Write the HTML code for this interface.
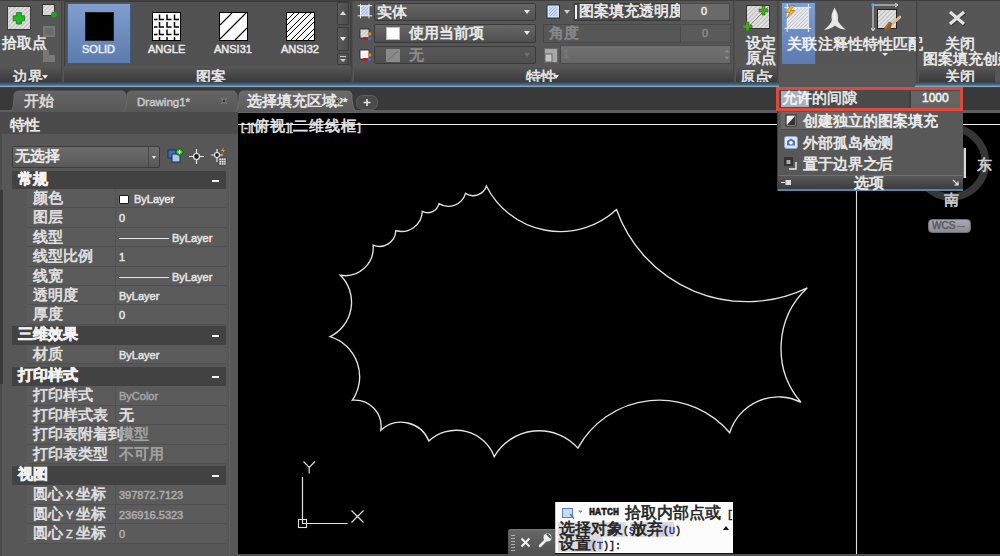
<!DOCTYPE html>
<html><head><meta charset="utf-8">
<style>
*{box-sizing:border-box;margin:0;padding:0}
html,body{width:1000px;height:556px;overflow:hidden;background:#000}
body{position:relative;font-family:"Liberation Sans",sans-serif;font-size:11px;color:#e6e6e6}
.a{position:absolute}
.t{position:absolute;white-space:nowrap;line-height:1;-webkit-text-stroke:0.5px}
.c{font-size:14.6px;line-height:0;-webkit-text-stroke:0.6px}
.c2{font-family:'Liberation Sans',sans-serif;font-size:15.5px;line-height:0;-webkit-text-stroke:0.6px}
/* ribbon */
#rib{left:0;top:0;width:1000px;height:87px;background:#565656}
.ptitle{position:absolute;top:66px;height:17px;background:linear-gradient(#575757,#3e3e3e 80%,#3a3a3a)}
.sep{position:absolute;top:0;width:3px;height:84px;background:linear-gradient(90deg,#404040,#5a5a5a)}
#blue{left:0;top:82px;width:1000px;height:7px;background:linear-gradient(#2e3a42 0,#3a5a70 1px,#4a6a85 3.3px,#8aa3bb 3.8px,#8aa3bb 5px,#25303a 5.6px,#25303a 7px)}
.combo{position:absolute;border:1px solid #3a3a3a;background:linear-gradient(#666,#505050);border-radius:2px}
.arrow{position:absolute;width:0;height:0;border-left:3.5px solid transparent;border-right:3.5px solid transparent;border-top:4px solid #e8e8e8}
/* tabs */
#tabbar{left:0;top:88px;width:1000px;height:24px;background:#393939}
/* props */
</style></head><body>

<div id="rib" class="a">
  <!-- boundary panel -->
  <svg class="a" style="left:7px;top:6px" width="24" height="24" viewBox="0 0 24 24">
    <defs><pattern id="hp" width="3" height="3" patternUnits="userSpaceOnUse" patternTransform="rotate(45)"><rect width="3" height="3" fill="#e0e0e0"/><rect width="1" height="3" fill="#bdbdbd"/></pattern></defs>
    <rect x="0.5" y="0.5" width="23" height="23" fill="url(#hp)" stroke="#3a3a3a"/>
    <path d="M9.4 6.6h5v3.2h3.2v5h-3.2v3.2h-5v-3.2h-3.2v-5h3.2z" fill="#1fb82a" stroke="#137a18" stroke-width="0.8"/>
  </svg>
  <div class="t" style="left:2px;top:38.5px;color:#ececec"><span class="c">拾取点</span></div>
  <svg class="a" style="left:42px;top:4px" width="16" height="14" viewBox="0 0 16 14">
    <rect x="0.5" y="0.5" width="12" height="11" fill="url(#hp)" stroke="#333"/>
    <circle cx="12" cy="10.5" r="3" fill="#2a9a2a"/>
  </svg>
  <svg class="a" style="left:43px;top:26px" width="13" height="12"><rect x="0" y="0" width="12" height="11" fill="#777"/><rect x="2" y="2" width="8" height="7" fill="#6a6a6a"/></svg>
  <svg class="a" style="left:43px;top:50px" width="13" height="13"><rect x="0" y="0" width="6" height="12" fill="#777"/><rect x="6" y="5" width="6" height="7" fill="#7a7a7a"/></svg>

  <!-- gallery -->
  <div class="a" style="left:64px;top:1px;width:287px;height:66px;border:1px solid #3b3b3b;border-radius:2px;background:#515151"></div>
  <div class="a" style="left:67px;top:3px;width:64px;height:61px;background:linear-gradient(#7f9fcf,#5d7bad);border:1px solid #41597f"></div>
  <div class="a" style="left:85px;top:12px;width:29px;height:29px;background:#000;border:1px solid #222"></div>
  <div class="t" style="left:82px;top:44px;font-size:11px;color:#e8eef8">SOLID</div>
  <svg class="a" style="left:152px;top:12px" width="29" height="29" viewBox="0 0 29 29">
    <rect x="0.5" y="0.5" width="28" height="28" fill="#fff" stroke="#000"/>
    <path d="M2 7.5h3.5M7.5 2.5V7.5h4.5M15 2.5V7.5h4.5M22.5 2.5V7.5h4.5M2 15h3.5M7.5 10V15h4.5M15 10V15h4.5M22.5 10V15h4.5M2 22.5h3.5M7.5 17.5V22.5h4.5M15 17.5V22.5h4.5M22.5 17.5V22.5h4.5M7.5 25V28M15 25V28M22.5 25V28" stroke="#000" stroke-width="1.5" fill="none"/>
  </svg>
  <div class="t" style="left:148px;top:44px;font-size:11px;color:#e8e8e8">ANGLE</div>
  <svg class="a" style="left:219px;top:12px" width="29" height="29" viewBox="0 0 29 29">
    <rect x="0.5" y="0.5" width="28" height="28" fill="#fff" stroke="#000"/>
    <path d="M1 13L13 1M1 27L27 1M16 28L28 16" stroke="#000" stroke-width="1.1" fill="none"/>
  </svg>
  <div class="t" style="left:214px;top:44px;font-size:11px;color:#e8e8e8">ANSI31</div>
  <svg class="a" style="left:286px;top:12px" width="29" height="29" viewBox="0 0 29 29">
    <rect x="0.5" y="0.5" width="28" height="28" fill="#fff" stroke="#000"/>
    <path d="M1 8L8 1M1 13L13 1M1 20L20 1M1 25L25 1M5 28L28 5M10 28L28 10M17 28L28 17M22 28L28 22" stroke="#000" stroke-width="1" fill="none"/>
  </svg>
  <div class="t" style="left:281px;top:44px;font-size:11px;color:#e8e8e8">ANSI32</div>
  <div class="a" style="left:337px;top:2px;width:12px;height:23px;background:linear-gradient(90deg,#5a5a5a,#4c4c4c);border:1px solid #3c3c3c"></div>
  <div class="a" style="left:337px;top:27px;width:12px;height:24px;background:linear-gradient(90deg,#5a5a5a,#4c4c4c);border:1px solid #3c3c3c"></div>
  <div class="a" style="left:337px;top:53px;width:12px;height:12px;background:linear-gradient(90deg,#5a5a5a,#4c4c4c);border:1px solid #3c3c3c"></div>
  <div class="a" style="left:340px;top:11px;width:0;height:0;border-left:3px solid transparent;border-right:3px solid transparent;border-bottom:4px solid #ddd"></div>
  <div class="arrow" style="left:340px;top:37px;border-left-width:3px;border-right-width:3px;border-top-width:4px"></div>
  <div class="a" style="left:340px;top:56px;width:6px;height:1px;background:#ccc"></div>
  <div class="arrow" style="left:340px;top:59px;border-left-width:3px;border-right-width:3px;border-top-width:3px;border-top-color:#ccc"></div>

  <!-- properties panel -->
  <svg class="a" style="left:357px;top:3px" width="16" height="17" viewBox="0 0 16 17">
    <defs><pattern id="hpb" width="2.2" height="2.2" patternUnits="userSpaceOnUse" patternTransform="rotate(45)"><rect width="2.2" height="2.2" fill="#d0dcf2"/><rect width="0.8" height="2.2" fill="#a0b4dc"/></pattern></defs>
    <rect x="3.7" y="2.7" width="8.3" height="10.1" fill="url(#hpb)"/>
    <path d="M3.5 0.8v14.5M12 0.8v14.5M0.6 2.7h14.5M0.6 12.8h14.5" stroke="#f0f0f0" stroke-width="1"/>
  </svg>
  <div class="combo" style="left:374px;top:3px;width:162px;height:18px"></div>
  <div class="t" style="left:377px;top:8px;color:#ececec"><span class="c">实体</span></div>
  <div class="arrow" style="left:524px;top:10px"></div>
  <svg class="a" style="left:358px;top:26px" width="15" height="16" viewBox="0 0 15 16">
    <rect x="2" y="3" width="9" height="9" fill="url(#hp)" stroke="#222" stroke-width="0.8"/>
    <path d="M4 12.5h6l-1.5 1.5h-4z" fill="#c02828"/><rect x="5" y="11" width="5" height="3" fill="#b82020"/>
    <circle cx="11.5" cy="8" r="1.8" fill="#e08a20"/><circle cx="11.5" cy="12.5" r="1.8" fill="#3a70c0"/>
  </svg>
  <div class="combo" style="left:374px;top:24px;width:162px;height:19px"></div>
  <div class="a" style="left:386px;top:27px;width:14px;height:13px;background:#fff;border:1px solid #bbb"></div>
  <div class="t" style="left:409px;top:29px;color:#ececec"><span class="c">使用当前项</span></div>
  <div class="arrow" style="left:524px;top:31px"></div>
  <svg class="a" style="left:358px;top:47px" width="15" height="16" viewBox="0 0 15 16">
    <rect x="2" y="3" width="9" height="9" fill="#f4f4f4" stroke="#222" stroke-width="0.8"/>
    <rect x="5" y="11" width="5" height="3" fill="#b82020"/>
    <circle cx="11.5" cy="8" r="1.8" fill="#e08a20"/><circle cx="11.5" cy="12.5" r="1.8" fill="#3a70c0"/>
  </svg>
  <div class="combo" style="left:374px;top:46px;width:162px;height:18px;background:linear-gradient(#575757,#4f4f4f)"></div>
  <svg class="a" style="left:386px;top:49px" width="14" height="13"><rect width="14" height="13" fill="#8a8a8a"/><path d="M2 11L12 2" stroke="#6c6c6c"/></svg>
  <div class="t" style="left:409px;top:51px;color:#8e8e8e"><span class="c">无</span></div>
  <div class="arrow" style="left:524px;top:53px;border-top-color:#6e6e6e"></div>

  <svg class="a" style="left:546px;top:4px" width="15" height="15" viewBox="0 0 15 15"><rect x="0.5" y="0.5" width="13.5" height="14" fill="#1e3450" /><rect x="1.5" y="1.5" width="11.5" height="12" fill="#d6e4f4"/><rect x="3" y="3" width="8.5" height="9" fill="url(#hpb)"/></svg>
  <div class="arrow" style="left:564px;top:10px;border-left-width:3px;border-right-width:3px;border-top-width:4px;border-top-color:#ccc"></div>
  <div class="a" style="left:574px;top:3px;width:106px;height:18px;background:#4a4a4a;border:1px solid #3a3a3a"></div>
  <div class="a" style="left:575px;top:5px;width:2px;height:14px;background:#f2f2f2"></div>
  <div class="t" style="left:579px;top:7px;color:#ececec"><span class="c">图案填充透明度</span></div>
  <div class="a" style="left:680px;top:3px;width:50px;height:18px;background:#6a6a6a;border:1px solid #4a4a4a"></div>
  <div class="t" style="left:701px;top:6px;color:#ececec">0</div>
  <div class="a" style="left:543px;top:24px;width:138px;height:19px;background:#575757;border:1px solid #484848"></div>
  <div class="t" style="left:549px;top:28.5px;color:#8a8a8a"><span class="c">角度</span></div>
  <div class="a" style="left:680px;top:24px;width:51px;height:19px;background:#5a5a5a;border:1px solid #4a4a4a"></div>
  <div class="t" style="left:702px;top:28px;color:#8a8a8a">0</div>
  <svg class="a" style="left:544px;top:48px" width="14" height="15" viewBox="0 0 14 15"><rect x="0.5" y="0.5" width="13" height="14" fill="#a8a8a8" stroke="#6a6a6a"/><rect x="1" y="6" width="7" height="8" fill="#c4c4c4" stroke="#555" stroke-width="0.8"/></svg>
  <div class="a" style="left:560px;top:45px;width:171px;height:19px;background:linear-gradient(#717171,#676767);border:1px solid #4a4a4a"></div>
  <div class="t" style="left:563px;top:49px;color:#7a7a7a">1</div>
  <svg class="a" style="left:724px;top:48px" width="6" height="13"><path d="M0.5 4.5l2.5-3l2.5 3z" fill="#8a8a8a"/><path d="M0.5 8.5l2.5 3l2.5-3z" fill="#8a8a8a"/></svg>

  <!-- origin -->
  <svg class="a" style="left:741px;top:4px" width="30" height="30" viewBox="0 0 30 30">
    <rect x="5.5" y="1.5" width="23" height="23" fill="url(#hp)" stroke="#333"/>
    <path d="M7 23L27 3" stroke="#888" stroke-width="1"/>
    <path d="M21 2h3v3h3v3h-3v3h-3v-3h-3v-3h3z" fill="#4aa526" stroke="#2d6a14" stroke-width="0.6"/>
    <path d="M5 18h3v3h3v3h-3v3h-3v-3h-3v-3h3z" fill="#4aa526" stroke="#2d6a14" stroke-width="0.6"/>
  </svg>
  <div class="t" style="left:746px;top:39px;color:#ececec"><span class="c">设定</span></div>
  <div class="t" style="left:746px;top:54px;color:#ececec"><span class="c">原点</span></div>

  <!-- options -->
  <div class="a" style="left:781px;top:2px;width:35px;height:63px;background:linear-gradient(#7f9fd0,#5d7aae);border:1px solid #44608c"></div>
  <svg class="a" style="left:784px;top:4px" width="28" height="28" viewBox="0 0 28 28">
    <defs><pattern id="hp2" width="2.5" height="2.5" patternUnits="userSpaceOnUse" patternTransform="rotate(45)"><rect width="2.5" height="2.5" fill="#eef0f4"/><rect width="0.9" height="2.5" fill="#b8bcc4"/></pattern></defs>
    <rect x="3" y="3.6" width="21" height="20.5" fill="url(#hp2)"/>
    <path d="M3.2 0v28M24.4 0v28M0.4 3.6h27M0.4 24.4h27" stroke="#e8eef8" stroke-width="1"/>
    <path d="M7 1.5l-5.5 7h4.5l-3.5 6l8.5-8h-4.5l4-5z" fill="#f2b630" stroke="#9a6a10" stroke-width="0.6"/>
  </svg>
  <div class="t" style="left:787px;top:39.5px;color:#f2f4f8"><span class="c">关联</span></div>
  <svg class="a" style="left:823px;top:7px" width="24" height="24" viewBox="0 0 24 24">
    <path d="M11.6 0.6C12.5 3 15 6.5 15 9.5C15 12 14.5 13 15.5 15C17.5 18 20.5 21 23 22.6C19 22.5 15 21 12 18.5C9 21 5 22.5 1 23C3.5 21 6.5 18 8.3 15C9.3 13 8.5 12 8.5 9.5C8.5 6.5 10.5 3 11.6 0.6Z" fill="#e6e6e6"/>
    <path d="M11.6 4L11.6 13" stroke="#f8f8f8" stroke-width="1"/>
  </svg>
  <div class="t" style="left:818px;top:39.5px;color:#ececec"><span class="c">注释性</span></div>
  <svg class="a" style="left:871px;top:3px" width="30" height="30" viewBox="0 0 30 30">
    <path d="M2 2h24M2 2v25" stroke="#e8e8e8" stroke-width="1"/>
    <path d="M24 0l3 2l-3 2M0 25l2 3l2-3" stroke="#e8e8e8" fill="none"/>
    <circle cx="2" cy="2" r="1.8" fill="#6aa0e0"/>
    <rect x="6.5" y="6.5" width="19" height="19" fill="url(#hp)" stroke="#222"/>
    <path d="M29 14L20 22" stroke="#d6bf8c" stroke-width="3" stroke-linecap="round"/>
    <path d="M21 20l-3 -1.5l-5 6.5l1.5 4l5-3z" fill="#8a5a2a"/>
    <path d="M18.5 19.5l-4.5 6" stroke="#b07a40" stroke-width="1.2"/>
  </svg>
  <div class="t" style="left:863px;top:39.5px;color:#ececec"><span class="c">特性匹配</span></div>
  <div class="arrow" style="left:882px;top:53px;border-left-width:3px;border-right-width:3px;border-top-width:3px"></div>

  <!-- close -->
  <svg class="a" style="left:947px;top:10px" width="20" height="16" viewBox="0 0 20 16">
    <path d="M3 2L17 14M17 2L3 14" stroke="#303030" stroke-width="3.6" transform="translate(0.6,0.8)"/><path d="M3 2L17 14M17 2L3 14" stroke="#e2e2e2" stroke-width="3.2"/>
  </svg>
  <div class="t" style="left:945px;top:39.5px;color:#ececec"><span class="c">关闭</span></div>
  <div class="t" style="left:923px;top:55px;color:#ececec"><span class="c">图案填充创建</span></div>

  <div class="sep" style="left:61px"></div>
  <div class="sep" style="left:351px"></div>
  <div class="sep" style="left:733px"></div>
  <div class="sep" style="left:777px"></div>
  <div class="sep" style="left:916px"></div>
  <div class="ptitle" style="left:0;width:61px"></div>
  <div class="ptitle" style="left:64px;width:287px"></div>
  <div class="ptitle" style="left:354px;width:379px"></div>
  <div class="ptitle" style="left:736px;width:41px"></div>
    <div class="ptitle" style="left:919px;width:76px"></div>
  <div class="t" style="left:13px;top:73px"><span class="c">边界</span></div>
  <div class="arrow" style="left:42px;top:75px"></div>
  <div class="t" style="left:196px;top:73px"><span class="c">图案</span></div>
  <div class="t" style="left:526px;top:73px"><span class="c">特性</span></div>
  <div class="arrow" style="left:553px;top:75px"></div>
  <div class="t" style="left:740px;top:73px"><span class="c">原点</span></div>
  <div class="arrow" style="left:767px;top:75px"></div>
  <div class="t" style="left:945px;top:73px"><span class="c">关闭</span></div>
</div>
<div id="blue" class="a"></div>
<div class="a" style="left:0;top:0;width:1000px;height:1px;background:#3e3e3e"></div>
<div class="a" style="left:779px;top:64px;width:136px;height:24px;background:#575757"></div>

<div id="tabbar" class="a">
  <svg class="a" style="left:0;top:0" width="1000" height="25">
    <defs><linearGradient id="tg" x1="0" y1="0" x2="0" y2="1"><stop offset="0" stop-color="#646464"/><stop offset="1" stop-color="#575757"/></linearGradient>
    <linearGradient id="tga" x1="0" y1="0" x2="0" y2="1"><stop offset="0" stop-color="#6a6a6a"/><stop offset="1" stop-color="#5a5a5a"/></linearGradient></defs>
    <rect x="0" y="22" width="1000" height="3" fill="#5e5e5e"/>
    <path d="M10 25 C12.4 22 14 17 14 8 Q14 3 19 3 H121 Q126 3 126 8 C126 17 128.4 22 130 25 Z" fill="url(#tg)" stroke="#6c6c6c" stroke-width="0.8"/>
    <path d="M123 25 C125.4 22 127 17 127 8 Q127 3 132 3 H232 Q237 3 237 8 C237 17 239.4 22 241 25 Z" fill="url(#tg)" stroke="#6c6c6c" stroke-width="0.8"/>
    <path d="M235 25 C237.4 22 239 17 239 8 Q239 3 244 3 H347 Q352 3 352 8 C352 17 354.4 22 356 25 Z" fill="url(#tga)" stroke="#767676" stroke-width="0.8"/>
    <rect x="356.5" y="7.5" width="21" height="14" rx="6" fill="#4a4a4a" stroke="#5e5e5e"/>
    <path d="M367 11v7M363.5 14.5h7" stroke="#e8e8e8" stroke-width="1.6"/>
  </svg>
  <div class="t" style="left:24px;top:9px;color:#dcdcdc"><span class="c">开始</span></div>
  <div class="t" style="left:137px;top:9px;color:#c8c8c8;font-size:11.5px">Drawing1*</div>
  <svg class="a" style="left:220px;top:8.5px" width="8" height="8"><path d="M1 1l6 6M7 1l-6 6" stroke="#7a7a7a" stroke-width="1.5"/><rect x="3" y="3" width="2" height="2" fill="#3c3c3c"/></svg>
  <div class="t" style="left:247px;top:9px;color:#eaeaea"><span class="c">选择填充区域</span>2*</div>
  <svg class="a" style="left:333px;top:8.5px" width="8" height="8"><path d="M1 1l6 6M7 1l-6 6" stroke="#7a7a7a" stroke-width="1.5"/><rect x="3" y="3" width="2" height="2" fill="#3c3c3c"/></svg>
</div>
<div id="props" class="a" style="left:0;top:0;width:238px;height:556px;background:none">
<div class="a" style="left:0;top:112px;width:238px;height:444px;background:#575757"></div>
<div class="a" style="left:0;top:112px;width:238px;height:22px;background:#4b4b4b"></div>
<div class="t" style="left:10px;top:121px;color:#ececec"><span class="c">特性</span></div>
<div class="a" style="left:0;top:134px;width:2px;height:422px;background:#4c4c4c"></div>
<div class="a" style="left:0;top:190px;width:3px;height:194px;background:#3a3a3a"></div>
<div class="a" style="left:229px;top:170px;width:1px;height:386px;background:#5f5f5f"></div>
<div class="combo" style="left:12px;top:146px;width:148px;height:22px;background:linear-gradient(#6c6c6c,#585858);border-color:#3c3c3c"></div>
<div class="a" style="left:148px;top:147px;width:1px;height:20px;background:#474747"></div>
<div class="t" style="left:15px;top:152px;color:#ececec"><span class="c">无选择</span></div>
<div class="arrow" style="left:152px;top:156px;border-left-width:2px;border-right-width:2px;border-top-width:3px"></div>
<svg class="a" style="left:167px;top:148px" width="17" height="15" viewBox="0 0 17 15"><rect x="1" y="2" width="8" height="8" fill="#3d6fb8" stroke="#1b2f55"/><rect x="5" y="6" width="8" height="8" fill="#a9c6ee" stroke="#1b2f55"/><circle cx="12.5" cy="4" r="3.5" fill="#2aa830" stroke="#0f5a12" stroke-width="0.7"/><path d="M12.5 2v4M10.5 4h4" stroke="#fff" stroke-width="1"/></svg>
<svg class="a" style="left:189px;top:149px" width="15" height="15" viewBox="0 0 15 15"><path d="M7.5 0v15M0 7.5h15" stroke="#e8e8e8" stroke-width="1.2"/><circle cx="7.5" cy="7.5" r="3" fill="#222" stroke="#eee" stroke-width="1.2"/></svg>
<svg class="a" style="left:211px;top:147px" width="18" height="19" viewBox="0 0 18 19"><path d="M6 2v13M0 8h12" stroke="#e8e8e8" stroke-width="1.2"/><circle cx="6" cy="8" r="2.5" fill="#222" stroke="#eee" stroke-width="1.1"/><path d="M13 0l-3 4h2l-1 3l3-4h-2z" fill="#e8a020"/><rect x="8" y="11" width="7" height="7" fill="#eee" stroke="#333" stroke-width="0.6"/><path d="M8 13.5h7M8 15.8h7M10.5 11v7M12.8 11v7" stroke="#555" stroke-width="0.6"/></svg>
<div class="a" style="left:12px;top:171px;width:214px;height:18px;background:#424242"></div>
<div class="t" style="left:18px;top:175px;color:#f2f2f2;font-weight:bold"><span class="c">常规</span></div>
<div class="a" style="left:212px;top:180px;width:7px;height:2px;background:#f4f4f4"></div>
<div class="a" style="left:27px;top:189px;width:199px;height:19px;background:#5b5b5b;border-bottom:1px solid #4f4f4f"></div>
<div class="a" style="left:115px;top:189px;width:1px;height:19px;background:#525252"></div>
<div class="t" style="left:33px;top:194px;color:#e2e2e2"><span class="c">颜色</span></div>
<div class="a" style="left:119px;top:195px;width:10px;height:9px;background:#fff;border:1px solid #1a1a1a;border-radius:1px"></div>
<div class="t" style="left:134px;top:194px;color:#e4e4e4">ByLayer</div>
<div class="a" style="left:27px;top:208px;width:199px;height:20px;background:#5b5b5b;border-bottom:1px solid #4f4f4f"></div>
<div class="a" style="left:115px;top:208px;width:1px;height:20px;background:#525252"></div>
<div class="t" style="left:33px;top:213px;color:#e2e2e2"><span class="c">图层</span></div>
<div class="t" style="left:119px;top:213px;color:#e4e4e4">0</div>
<div class="a" style="left:27px;top:228px;width:199px;height:19px;background:#5b5b5b;border-bottom:1px solid #4f4f4f"></div>
<div class="a" style="left:115px;top:228px;width:1px;height:19px;background:#525252"></div>
<div class="t" style="left:33px;top:233px;color:#e2e2e2"><span class="c">线型</span></div>
<div class="a" style="left:119px;top:238px;width:50px;height:1px;background:#e6e6e6"></div>
<div class="t" style="left:172px;top:233px;color:#e4e4e4">ByLayer</div>
<div class="a" style="left:27px;top:247px;width:199px;height:20px;background:#5b5b5b;border-bottom:1px solid #4f4f4f"></div>
<div class="a" style="left:115px;top:247px;width:1px;height:20px;background:#525252"></div>
<div class="t" style="left:33px;top:252px;color:#e2e2e2"><span class="c">线型比例</span></div>
<div class="t" style="left:119px;top:252px;color:#e4e4e4">1</div>
<div class="a" style="left:27px;top:267px;width:199px;height:19px;background:#5b5b5b;border-bottom:1px solid #4f4f4f"></div>
<div class="a" style="left:115px;top:267px;width:1px;height:19px;background:#525252"></div>
<div class="t" style="left:33px;top:272px;color:#e2e2e2"><span class="c">线宽</span></div>
<div class="a" style="left:119px;top:277px;width:50px;height:1px;background:#e6e6e6"></div>
<div class="t" style="left:172px;top:272px;color:#e4e4e4">ByLayer</div>
<div class="a" style="left:27px;top:286px;width:199px;height:19px;background:#5b5b5b;border-bottom:1px solid #4f4f4f"></div>
<div class="a" style="left:115px;top:286px;width:1px;height:19px;background:#525252"></div>
<div class="t" style="left:33px;top:291px;color:#e2e2e2"><span class="c">透明度</span></div>
<div class="t" style="left:119px;top:291px;color:#e4e4e4">ByLayer</div>
<div class="a" style="left:27px;top:305px;width:199px;height:20px;background:#5b5b5b;border-bottom:1px solid #4f4f4f"></div>
<div class="a" style="left:115px;top:305px;width:1px;height:20px;background:#525252"></div>
<div class="t" style="left:33px;top:310px;color:#e2e2e2"><span class="c">厚度</span></div>
<div class="t" style="left:119px;top:310px;color:#e4e4e4">0</div>
<div class="a" style="left:12px;top:326px;width:214px;height:19px;background:#424242"></div>
<div class="t" style="left:18px;top:330px;color:#f2f2f2;font-weight:bold"><span class="c">三维效果</span></div>
<div class="a" style="left:212px;top:335px;width:7px;height:2px;background:#f4f4f4"></div>
<div class="a" style="left:27px;top:345px;width:199px;height:19px;background:#5b5b5b;border-bottom:1px solid #4f4f4f"></div>
<div class="a" style="left:115px;top:345px;width:1px;height:19px;background:#525252"></div>
<div class="t" style="left:33px;top:350px;color:#e2e2e2"><span class="c">材质</span></div>
<div class="t" style="left:119px;top:350px;color:#e4e4e4">ByLayer</div>
<div class="a" style="left:12px;top:367px;width:214px;height:19px;background:#424242"></div>
<div class="t" style="left:18px;top:371px;color:#f2f2f2;font-weight:bold"><span class="c">打印样式</span></div>
<div class="a" style="left:212px;top:376px;width:7px;height:2px;background:#f4f4f4"></div>
<div class="a" style="left:27px;top:386px;width:199px;height:20px;background:#5b5b5b;border-bottom:1px solid #4f4f4f"></div>
<div class="a" style="left:115px;top:386px;width:1px;height:20px;background:#525252"></div>
<div class="t" style="left:33px;top:391px;color:#e2e2e2"><span class="c">打印样式</span></div>
<div class="t" style="left:119px;top:391px;color:#a4a4a4">ByColor</div>
<div class="a" style="left:27px;top:406px;width:199px;height:19px;background:#5b5b5b;border-bottom:1px solid #4f4f4f"></div>
<div class="a" style="left:115px;top:406px;width:1px;height:19px;background:#525252"></div>
<div class="t" style="left:33px;top:411px;color:#e2e2e2"><span class="c">打印样式表</span></div>
<div class="t" style="left:119px;top:411px;color:#e4e4e4"><span class="c">无</span></div>
<div class="a" style="left:27px;top:425px;width:199px;height:20px;background:#5b5b5b;border-bottom:1px solid #4f4f4f"></div>
<div class="a" style="left:115px;top:425px;width:1px;height:20px;background:#525252"></div>
<div class="t" style="left:33px;top:430px;color:#e2e2e2"><span class="c">打印表附着到</span></div>
<div class="t" style="left:119px;top:430px;color:#a4a4a4"><span class="c">模型</span></div>
<div class="a" style="left:27px;top:445px;width:199px;height:19px;background:#5b5b5b;border-bottom:1px solid #4f4f4f"></div>
<div class="a" style="left:115px;top:445px;width:1px;height:19px;background:#525252"></div>
<div class="t" style="left:33px;top:450px;color:#e2e2e2"><span class="c">打印表类型</span></div>
<div class="t" style="left:119px;top:450px;color:#a4a4a4"><span class="c">不可用</span></div>
<div class="a" style="left:12px;top:466px;width:214px;height:19px;background:#424242"></div>
<div class="t" style="left:18px;top:470px;color:#f2f2f2;font-weight:bold"><span class="c">视图</span></div>
<div class="a" style="left:212px;top:475px;width:7px;height:2px;background:#f4f4f4"></div>
<div class="a" style="left:27px;top:485px;width:199px;height:20px;background:#5b5b5b;border-bottom:1px solid #4f4f4f"></div>
<div class="a" style="left:115px;top:485px;width:1px;height:20px;background:#525252"></div>
<div class="t" style="left:33px;top:490px;color:#e2e2e2"><span class="c">圆心</span> X <span class="c">坐标</span></div>
<div class="t" style="left:119px;top:490px;color:#acacac">397872.7123</div>
<div class="a" style="left:27px;top:505px;width:199px;height:19px;background:#5b5b5b;border-bottom:1px solid #4f4f4f"></div>
<div class="a" style="left:115px;top:505px;width:1px;height:19px;background:#525252"></div>
<div class="t" style="left:33px;top:510px;color:#e2e2e2"><span class="c">圆心</span> Y <span class="c">坐标</span></div>
<div class="t" style="left:119px;top:510px;color:#acacac">236916.5323</div>
<div class="a" style="left:27px;top:524px;width:199px;height:20px;background:#5b5b5b;border-bottom:1px solid #4f4f4f"></div>
<div class="a" style="left:115px;top:524px;width:1px;height:20px;background:#525252"></div>
<div class="t" style="left:33px;top:529px;color:#e2e2e2"><span class="c">圆心</span> Z <span class="c">坐标</span></div>
<div class="t" style="left:119px;top:529px;color:#acacac">0</div>
</div>
<svg class="a" style="left:0;top:0" width="1000" height="556" viewBox="0 0 1000 556">
  <path d="M340.4 275.2 A27.9 27.9 0 0 0 373.1 245.2 A16.5 16.5 0 0 0 395.8 230.7 A20.9 20.9 0 0 0 422.3 211.3 A11.6 11.6 0 0 0 439.0 203.7 A17.9 17.9 0 0 0 465.5 193.4 A13.9 13.9 0 0 0 486.4 186.0 A82.7 82.7 0 0 0 616.5 209.6 A138.5 138.5 0 0 0 807.3 287.8 A83.0 83.0 0 0 0 800.9 402.3 A50.7 50.7 0 0 0 729.7 432.8 A92.7 92.7 0 0 0 577.9 448.1 A51.9 51.9 0 0 0 494.2 456.7 A40.3 40.3 0 0 0 428.9 441.1 A29.9 29.9 0 0 0 380.8 430.2 A26.3 26.3 0 0 0 352.4 400.2 A41.9 41.9 0 0 0 330.1 336.6 A38.3 38.3 0 0 0 340.4 275.2Z" fill="none" stroke="#e4e4e4" stroke-width="1.35"/>
  <path d="M238 124.5H1000" stroke="#f0f0f0" stroke-width="1.2"/>
  <path d="M856.5 190V556" stroke="#e0e0e0" stroke-width="1.1"/>
  <!-- compass ring -->
  <circle cx="951" cy="162.5" r="34.5" fill="none" stroke="#363636" stroke-width="7.5"/>
  <rect x="963.5" y="148" width="2.5" height="30" fill="#d8d8d8"/>
  <!-- UCS icon -->
  <path d="M302.5 477V523.5H347.5" stroke="#e0e0e0" stroke-width="1.2" fill="none"/>
  <rect x="298.5" y="519.5" width="8" height="8" fill="none" stroke="#e0e0e0" stroke-width="1.1"/>
  <path d="M351.5 510.5l12 12M363.5 510.5l-12 12" stroke="#e0e0e0" stroke-width="1.2"/>
  <path d="M303.5 461.5l5.7 6l5.8-6M309.2 467.5v6" stroke="#e0e0e0" stroke-width="1.2" fill="none"/>
</svg>
<div class="t" style="left:977px;top:160.5px;color:#d0d0d0"><span class="c">东</span></div>
<div class="t" style="left:944px;top:195.5px;color:#d0d0d0"><span class="c">南</span></div>
<div class="a" style="left:928px;top:219px;width:43px;height:14px;border-radius:4px;background:linear-gradient(#a8a8b0,#8c8c94);border:1px solid #6e6e74"></div>
<div class="t" style="left:932px;top:221px;color:#5a5a60;font-size:10px">WCS</div>
<div class="a" style="left:957px;top:226px;width:8px;height:1px;background:#6a6a70"></div>
<div class="t" style="left:241px;top:122px;color:#e4e4e4;font-size:11px">[-][<span class="c" style="letter-spacing:1.3px">俯视</span>][<span class="c" style="letter-spacing:1.3px">二维线框</span>]</div>



<div class="a" style="left:777px;top:87px;width:186px;height:104px;background:#585858;border-left:1px solid #3a3a3a"></div>
<div class="a" style="left:776px;top:87px;width:187px;height:24px;border:3px solid #dc4a3e;background:#4a4a4a"></div>
<div class="a" style="left:781px;top:91px;width:28px;height:16px;background:#a8aebb"></div>
<div class="t" style="left:782px;top:94px;color:#f4f4f4"><span class="c">允许</span><span style="color:#e8e8e8"><span class="c">的间隙</span></span></div>
<div class="a" style="left:909px;top:91px;width:51px;height:17px;background:#646464;border-left:2px solid #3e3e3e"></div>
<div class="t" style="left:922px;top:92px;color:#f4f4f4;font-size:12px">1000</div>
<div class="a" style="left:781px;top:112px;width:124px;height:18px;background:#686868;border-bottom:1px solid #4a4a4a"></div>
<svg class="a" style="left:785px;top:114px" width="12" height="13" viewBox="0 0 12 13"><rect x="1" y="1" width="10" height="11" fill="#eee" stroke="#333" stroke-width="1.2"/><path d="M2 11L10 2V11z" fill="#333"/></svg>
<div class="t" style="left:803px;top:116.5px;color:#f0f0f0"><span class="c">创建独立的图案填充</span></div>
<svg class="a" style="left:784px;top:136px" width="14" height="13" viewBox="0 0 14 13"><rect x="0.5" y="0.5" width="13" height="12" rx="2" fill="#dfe6f2" stroke="#8ea4c8"/><path d="M7 2.5L11 5v4.5H3V5z" fill="#5577c0"/><circle cx="7" cy="6.8" r="1.8" fill="#fff"/></svg>
<div class="t" style="left:803px;top:138.5px;color:#ececec"><span class="c">外部孤岛检测</span></div>
<div class="arrow" style="left:875px;top:141px;border-left-width:3px;border-right-width:3px;border-top-width:3px;border-top-color:#ddd"></div>
<svg class="a" style="left:784px;top:157px" width="14" height="13" viewBox="0 0 14 13"><rect x="0" y="0" width="9" height="9" fill="#333"/><rect x="2.5" y="3" width="4" height="4" fill="#aaa"/><path d="M12 5v7H5" stroke="#eee" stroke-width="1.4" fill="none"/></svg>
<div class="t" style="left:803px;top:160px;color:#ececec"><span class="c">置于边界之后</span></div>
<div class="arrow" style="left:875px;top:162px;border-left-width:3px;border-right-width:3px;border-top-width:3px;border-top-color:#ddd"></div>
<div class="a" style="left:778px;top:175px;width:185px;height:14px;background:linear-gradient(#585858,#3c3c3c);border-top:1px solid #6e6e6e"></div>
<div class="a" style="left:778px;top:189px;width:185px;height:2px;background:#4f86ad"></div>
<div class="a" style="left:781px;top:182px;width:4px;height:1px;background:#eee"></div>
<div class="a" style="left:785px;top:180px;width:6px;height:5px;background:#ddd;border-left:1px solid #999"></div>
<div class="t" style="left:854px;top:178.5px;color:#ececec"><span class="c">选项</span></div>
<svg class="a" style="left:952px;top:179px" width="7" height="7"><path d="M1 1l5 5M6 2.5V6H2.5" stroke="#eee" stroke-width="1.2" fill="none"/></svg>

<div class="a" style="left:508px;top:529px;width:48px;height:27px;background:linear-gradient(#676767,#4e4e4e);border-radius:3px 0 0 0;border-top:1px solid #777"></div>
<div class="a" style="left:511px;top:535px;width:4px;height:18px;background:repeating-linear-gradient(#b0b0b0 0 1px,transparent 1px 3px)"></div>
<svg class="a" style="left:520px;top:537px" width="11" height="11"><path d="M1.5 1.5l8 8M9.5 1.5l-8 8" stroke="#f4f4f4" stroke-width="2"/></svg>
<svg class="a" style="left:538px;top:533px" width="14" height="15" viewBox="0 0 14 15"><path d="M2 13l6-6" stroke="#f0f0f0" stroke-width="2.6" stroke-linecap="round"/><circle cx="9.5" cy="4.5" r="4" fill="#f0f0f0"/><path d="M9 1l4 4" stroke="#5a5a5a" stroke-width="2"/></svg>
<div class="a" style="left:555px;top:502px;width:178px;height:52px;background:#fcfcfc;border-left:1px solid #ccc"></div>
<div class="a" style="left:555px;top:553px;width:178px;height:3px;background:#111"></div>
<svg class="a" style="left:562px;top:508px" width="20" height="11" viewBox="0 0 20 11"><rect x="0.5" y="0.5" width="10" height="9" fill="#c9dcf4" stroke="#5a7fc0"/><path d="M8 6l4 4.5" stroke="#3a6fc0" stroke-width="1.2"/><path d="M16 2.5l2.5 2.5l2.5-2.5z" fill="#888"/></svg>
<div class="t" style="left:589px;top:508px;color:#1a1a1a;font-family:'Liberation Mono',monospace;font-weight:bold;font-size:10px">HATCH</div>
<div class="t" style="left:625px;top:510.5px;color:#222;font-family:'Liberation Mono',monospace;font-size:10px;"><span class="c2">拾取内部点或</span> [</div>
<div class="a" style="left:558px;top:522px;width:68px;height:15px;background:#dcdcdc;border-radius:2px"></div>
<div class="a" style="left:630px;top:522px;width:44px;height:15px;background:#dcdcdc;border-radius:2px"></div>
<div class="a" style="left:558px;top:537px;width:45px;height:15px;background:#dcdcdc;border-radius:2px"></div>
<div class="a" style="left:611px;top:524px;width:8px;height:12px;background:#c8c8dc;border-radius:5px"></div>
<div class="a" style="left:659px;top:524px;width:8px;height:12px;background:#c8c8dc;border-radius:5px"></div>
<div class="a" style="left:588px;top:539px;width:8px;height:12px;background:#c8c8dc;border-radius:5px"></div>
<div class="t" style="left:559px;top:527px;color:#222;font-family:'Liberation Mono',monospace;font-size:10px;"><span class="c2">选择对象</span>(<span style="color:#3333aa">S</span>)</div>
<div class="t" style="left:631px;top:527px;color:#222;font-family:'Liberation Mono',monospace;font-size:10px;"><span class="c2">放弃</span>(<span style="color:#3333aa">U</span>)</div>
<div class="t" style="left:559px;top:542px;color:#222;font-family:'Liberation Mono',monospace;font-size:10px;"><span class="c2">设置</span>(<span style="color:#3333aa">T</span>)]:</div>
<div class="a" style="left:723px;top:526px;width:0;height:0;border-left:3.5px solid transparent;border-right:3.5px solid transparent;border-bottom:4px solid #111"></div>
<div class="a" style="left:238px;top:554px;width:762px;height:2px;background:#505050"></div>
</body></html>
